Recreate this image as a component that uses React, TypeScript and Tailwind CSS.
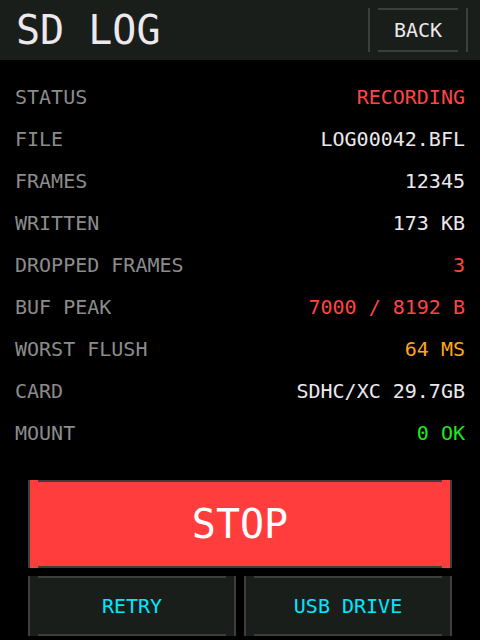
import React from "react";

const rows: { label: string; value: string; color: string }[] = [
  { label: "STATUS", value: "RECORDING", color: "text-[#ff4444]" },
  { label: "FILE", value: "LOG00042.BFL", color: "text-[#ece8ec]" },
  { label: "FRAMES", value: "12345", color: "text-[#ece8ec]" },
  { label: "WRITTEN", value: "173 KB", color: "text-[#ece8ec]" },
  { label: "DROPPED FRAMES", value: "3", color: "text-[#ff4444]" },
  { label: "BUF PEAK", value: "7000 / 8192 B", color: "text-[#ff4444]" },
  { label: "WORST FLUSH", value: "64 MS", color: "text-[#ffa51f]" },
  { label: "CARD", value: "SDHC/XC 29.7GB", color: "text-[#ece8ec]" },
  { label: "MOUNT", value: "0 OK", color: "text-[#22e622]" },
];

function Lines() {
  return (
    <>
      <span className="absolute left-[8px] right-[8px] top-0 h-[2px] bg-[#3c3f3c]" />
      <span className="absolute left-[8px] right-[8px] bottom-0 h-[2px] bg-[#3c3f3c]" />
    </>
  );
}

export default function App() {
  return (
    <div
      className="w-[480px] h-[640px] bg-black overflow-hidden flex flex-col"
      style={{ fontFamily: '"DejaVu Sans Mono", "Liberation Mono", monospace' }}
    >
      <div className="h-[60px] bg-[#1a1e1b] flex items-center justify-between pl-[16px] pr-[12px]">
        <div className="text-[40px] leading-[60px] text-[#ece8ec]">SD LOG</div>
        <div className="relative w-[100px] h-[44px] border-x-2 border-[#3c3f3c] flex items-center justify-center text-[20px] text-[#ece8ec]">
          <Lines />
          BACK
        </div>
      </div>
      <div className="flex flex-col pt-[16px] px-[15px]">
        {rows.map((r) => (
          <div key={r.label} className="h-[42px] flex items-center justify-between text-[20px] leading-[42px]">
            <span className="text-[#8c8c8c]">{r.label}</span>
            <span className={r.color}>{r.value}</span>
          </div>
        ))}
      </div>
      <div className="mt-[26px] px-[28px] flex flex-col gap-[8px]">
        <div className="relative h-[88px] bg-[#ff3d3d] border-x-2 border-[#3c3f3c] flex items-center justify-center text-[40px] text-white">
          <Lines />
          STOP
        </div>
        <div className="flex gap-[8px]">
          <div className="relative flex-1 h-[60px] bg-[#1a1e1b] border-x-2 border-[#3c3f3c] flex items-center justify-center text-[20px] text-[#00e8ff]">
            <Lines />
            RETRY
          </div>
          <div className="relative flex-1 h-[60px] bg-[#1a1e1b] border-x-2 border-[#3c3f3c] flex items-center justify-center text-[20px] text-[#00e8ff]">
            <Lines />
            USB DRIVE
          </div>
        </div>
      </div>
    </div>
  );
}
